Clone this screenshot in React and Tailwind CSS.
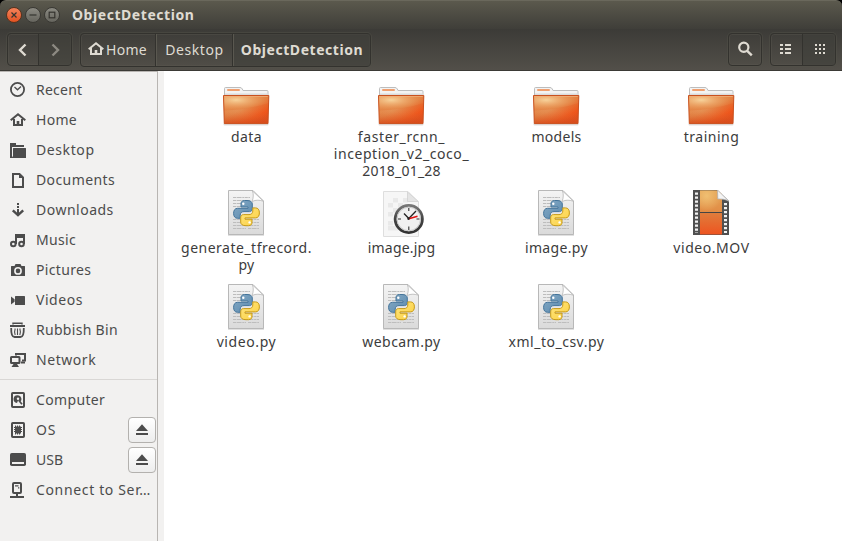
import React from 'react';

const INK = '#4c4c4c';

const sideIcons = {
  recent: (
    <g fill="none" stroke={INK}>
      <circle cx="7.5" cy="7.5" r="6.6" strokeWidth="1.8" />
      <path d="M4.5 5L7.5 7.8L11 4.5" strokeWidth="1.3" />
    </g>
  ),
  home: (
    <g fill="none" stroke={INK}>
      <path d="M0.7 8.3L8 2.2L15.3 8.3" strokeWidth="2" />
      <path d="M4 7V13H12V7" strokeWidth="2" />
      <path d="M8 13V9" strokeWidth="2.6" />
    </g>
  ),
  desktop: (
    <g fill={INK}>
      <path d="M0 1H6V3H14V5H2V16H0Z" />
      <path d="M3 6.5Q3 6 3.5 6H15.5Q16 6 16 6.5V16H1.5L3 14Z" />
    </g>
  ),
  documents: (
    <g>
      <path d="M3 2H9.5L13 5.5V15H3Z" fill="none" stroke={INK} strokeWidth="2" />
      <path d="M9 2L13 6H9Z" fill={INK} />
    </g>
  ),
  downloads: (
    <g fill={INK}>
      <path d="M7 1H9V3H7ZM7 4H9V6H7ZM7 7H9V12H7Z" />
      <path d="M2.8 8.3L8 13.2L13.2 8.3" fill="none" stroke={INK} strokeWidth="2.4" />
    </g>
  ),
  music: (
    <g fill="none" stroke={INK} strokeWidth="2">
      <path d="M6 12V3H14V12M6 5H14" />
      <circle cx="3.3" cy="12" r="2.3" />
      <circle cx="11.5" cy="12" r="2.3" />
    </g>
  ),
  pictures: (
    <g>
      <path d="M1 4.5Q1 4 1.5 4H4.5L5.5 2H10.5L11.5 4H14.5Q15 4 15 4.5V14H1Z" fill={INK} />
      <circle cx="8" cy="8.9" r="3.1" fill="none" stroke="#f2f1f0" strokeWidth="1.6" />
    </g>
  ),
  videos: (
    <g fill={INK}>
      <rect x="5" y="4" width="10" height="9" rx="0.6" />
      <path d="M1 4.5L4.6 7.3V9.7L1 12.5Z" />
    </g>
  ),
  bin: (
    <g fill="none" stroke={INK}>
      <path d="M3 2.5V1.2H12V2.5" strokeWidth="1.4" />
      <path d="M0 4H15" strokeWidth="2" />
      <path d="M1.2 6Q1 15 4.5 15H10.5Q14 15 13.8 6" strokeWidth="1.8" />
      <path d="M5.2 6.5Q4 10 5.2 13M7.5 6.5V13M9.8 6.5Q11 10 9.8 13" strokeWidth="1.1" />
    </g>
  ),
  network: (
    <g fill="none" stroke={INK} strokeWidth="2">
      <path d="M6 3.5V2H15V8.5H12" />
      <rect x="1" y="5" width="8.5" height="6" rx="0.5" />
      <path d="M11 10.5H15" />
      <path d="M3.5 12H7L9 15H1.5Z" fill={INK} stroke="none" />
    </g>
  ),
  computer: (
    <g>
      <rect x="2" y="1" width="12" height="14" rx="0.8" fill="none" stroke={INK} strokeWidth="2" />
      <path d="M8 3.2A3.9 3.9 0 1 0 7 11L8.2 8.2L10.2 10A3.9 3.9 0 0 0 8 3.2Z" fill={INK} />
      <circle cx="8" cy="6.8" r="1.2" fill="#f2f1f0" />
      <path d="M8.7 8.3L12 12.3" stroke={INK} strokeWidth="1.7" />
    </g>
  ),
  os: (
    <g>
      <rect x="2" y="1" width="12" height="14" rx="0.8" fill="none" stroke={INK} strokeWidth="2" />
      <rect x="5" y="4.5" width="6" height="7" fill={INK} />
      <path d="M4 5.5H12M4 7.5H12M4 9.5H12M5.5 3.5V12.5M7.5 3.5V12.5M9.5 3.5V12.5" stroke={INK} />
    </g>
  ),
  usb: (
    <g>
      <rect x="0" y="1" width="16" height="13" rx="1.8" fill={INK} />
      <rect x="2" y="10" width="12" height="2" fill="#f2f1f0" />
    </g>
  ),
  server: (
    <g fill="none" stroke={INK}>
      <rect x="3" y="1" width="8" height="10" rx="1" strokeWidth="2" />
      <path d="M5 3.8H8.5M8 5.8H9.3" strokeWidth="1.2" />
      <path d="M7 11V15M0 15H14" strokeWidth="2" />
    </g>
  ),
};

const places = [
  ['recent', 'Recent', 'tracking-[0.25px]'],
  ['home', 'Home', 'tracking-[0.3px]'],
  ['desktop', 'Desktop', 'tracking-[0.6px]'],
  ['documents', 'Documents', 'tracking-[0.4px]'],
  ['downloads', 'Downloads', 'tracking-[0.5px]'],
  ['music', 'Music', 'tracking-[0.35px]'],
  ['pictures', 'Pictures', 'tracking-[0.35px]'],
  ['videos', 'Videos', 'tracking-[0.55px]'],
  ['bin', 'Rubbish Bin', 'tracking-[0.3px]'],
  ['network', 'Network', 'tracking-[0.55px]'],
];

const devices = [
  ['computer', 'Computer', 'tracking-[0.35px]'],
  ['os', 'OS', 'tracking-[0.8px]', true],
  ['usb', 'USB', 'tracking-[0.1px]', true],
  ['server', 'Connect to Ser…', 'tracking-[0.65px]'],
];

function Place({ icon, label, tracking, eject }) {
  return (
    <li className="flex h-[30px] items-center pl-[10px] pr-px">
      <svg className="size-4 shrink-0" viewBox="0 0 16 16">{sideIcons[icon]}</svg>
      <span className={`ml-[10px] whitespace-nowrap pb-[2px] ${tracking}`}>{label}</span>
      {eject && (
        <button className="ml-auto flex h-[26px] w-7 shrink-0 items-center justify-center rounded-[4px] border border-[#b3b1ae] bg-linear-to-b from-white to-[#ededed]">
          <svg width="12" height="12" viewBox="0 0 12 12" fill={INK}>
            <path d="M6 0.3L12 7H0Z" />
            <rect y="9" width="12" height="2" />
          </svg>
        </button>
      )}
    </li>
  );
}

function Folder() {
  return (
    <svg width="50" height="50" viewBox="0 0 50 50">
      <defs>
        <linearGradient id="folderBase" x1="0" y1="0" x2="0.8" y2="1">
          <stop offset="0" stopColor="#e58a4c" />
          <stop offset="0.5" stopColor="#e07a3c" />
          <stop offset="0.8" stopColor="#ee5218" />
          <stop offset="1" stopColor="#e24a18" />
        </linearGradient>
        <radialGradient id="folderGlow" cx="0.28" cy="0.3" r="0.75">
          <stop offset="0" stopColor="#f7d39c" />
          <stop offset="1" stopColor="#eda15c" stopOpacity="0.1" />
        </radialGradient>
        <linearGradient id="folderShade" x1="0" y1="0" x2="0" y2="1">
          <stop offset="0.6" stopColor="#d8622b" stopOpacity="0" />
          <stop offset="1" stopColor="#d0481a" stopOpacity="0.7" />
        </linearGradient>
      </defs>
      <rect x="2.5" y="44" width="45" height="2.6" rx="1" fill="#000" opacity="0.12" />
      <path d="M3.5 20V9.5Q3.5 8.5 4.5 8.5H19Q20.5 8.5 21.3 10L22 11.5H46Q47 11.5 47 12.5V20Z" fill="#f3f3f3" stroke="#bdbdbd" />
      <rect x="6" y="10" width="13" height="2" rx="1" fill="#f0a070" />
      <rect x="4" y="14.5" width="43" height="2" fill="#dcdcdc" />
      <path d="M2.5 16.5H47.8L47 44.6H3.3Z" fill="url(#folderBase)" />
      <path d="M2.5 16.5H47.8L47 44.6H3.3Z" fill="url(#folderShade)" />
      <path d="M2.5 16.5H47.8L47.6 24Q27 31 2.8 31.5Z" fill="url(#folderGlow)" />
      <path d="M2.8 31.5Q27 31 47.6 24L47 44.6H3.3Z" fill="url(#folderGlow)" opacity="0.25" />
      <path d="M2.5 16.5H47.8L47 44.6H3.3Z" fill="none" stroke="#c9511f" />
      <path d="M3.5 17.5H46.8" stroke="#f0ae78" opacity="0.8" />
    </svg>
  );
}

const PAGE = 'M7.5 0.5H32L42.5 11V44.5H7.5Z';
const SNAKE =
  'M23.5 10.5C20.5 10.7 20 12.2 20 14V17H27V18.3H16.5C13.8 18.3 12.6 20.5 12.6 23.3C12.6 26.5 14 28.3 16.5 28.3H19.2V25.2C19.2 22.8 20.8 21.6 23 21.6H28.5C30.4 21.6 31.3 20.3 31.3 18.5V14C31.3 11.8 29.4 10.5 26 10.5Z';

function PythonFile() {
  return (
    <svg width="50" height="50" viewBox="0 0 50 50">
      <defs>
        <linearGradient id="pyPage" x1="0" y1="0" x2="0" y2="1">
          <stop offset="0" stopColor="#f4f4f4" />
          <stop offset="1" stopColor="#dadada" />
        </linearGradient>
        <linearGradient id="pyBlue" x1="0" y1="0" x2="1" y2="1">
          <stop offset="0" stopColor="#86aac5" />
          <stop offset="1" stopColor="#5b8aae" />
        </linearGradient>
        <linearGradient id="pyGold" x1="0" y1="0" x2="1" y2="1">
          <stop offset="0" stopColor="#fbcf3f" />
          <stop offset="1" stopColor="#ffe680" />
        </linearGradient>
      </defs>
      <rect x="7" y="44" width="36" height="2" fill="#000" opacity="0.12" />
      <path d={PAGE} fill="url(#pyPage)" stroke="#b8b8b8" />
      <path d="M12 7.5H29M12 10.5H29M12 13.5H29M12 16.5H29M12 29.5H38M12 32.5H38M12 35.5H38M12 38.5H25M27 38.5H38" stroke="#bdbdbd" strokeDasharray="3 0.6 5 0.7 2 0.5" />
      <path d="M31.5 1C32.6 4 32.6 8 31 11.5C35 9.6 39 10 42.5 11.3Z" fill="#fff" stroke="#b5b5b5" strokeWidth="0.8" />
      <path d={SNAKE} fill="url(#pyBlue)" stroke="#44749a" strokeWidth="1" />
      <path d={SNAKE} transform="rotate(180 25.5 23.1)" fill="url(#pyGold)" stroke="#c79a18" strokeWidth="1" />
      <circle cx="22.3" cy="13.8" r="1.2" fill="#fff" />
      <circle cx="28.6" cy="32.4" r="1.2" fill="#fff" />
    </svg>
  );
}

const CHECKS = [[17, 8], [27, 8], [12, 13], [22, 13], [17, 18], [12, 22], [17, 27], [12, 31], [12, 36], [17, 36], [22, 17]];

function LoadingImage() {
  return (
    <svg width="50" height="50" viewBox="0 0 50 50">
      <defs>
        <linearGradient id="clockRim" x1="0" y1="0" x2="0" y2="1">
          <stop offset="0" stopColor="#777" />
          <stop offset="0.5" stopColor="#444" />
          <stop offset="1" stopColor="#333" />
        </linearGradient>
      </defs>
      <path d="M7.5 1.5H32L42.5 12V46.5H7.5Z" fill="#f6f6f6" stroke="#dedede" />
      {CHECKS.map(([x, y]) => (
        <rect key={`${x}-${y}`} x={x} y={y} width="5" height="4.5" fill="#e9e9e9" />
      ))}
      <path d="M31.5 2V11.5H42.3Z" fill="#e4e4e4" stroke="#d0d0d0" strokeWidth="0.8" />
      <circle cx="32.8" cy="29" r="13.6" fill="#f1f1f1" stroke="url(#clockRim)" strokeWidth="2.8" />
      <circle cx="32.8" cy="29" r="11.8" fill="none" stroke="#bbb" strokeWidth="0.8" />
      <path d="M32.8 18V21M32.8 36.5V40M22 29H25M40.5 29H43.5" stroke="#333" strokeWidth="1.1" />
      <path d="M32.8 28.5L28 23.5M32.8 28.5L40 21" stroke="#222" strokeWidth="1.3" />
      <path d="M32.8 28.8L41.5 26.3" stroke="#e01010" strokeWidth="1.5" />
      <circle cx="32.5" cy="28.7" r="1.2" fill="#222" />
    </svg>
  );
}

function VideoFile() {
  return (
    <svg width="50" height="50" viewBox="0 0 50 50">
      <defs>
        <linearGradient id="reel" x1="0" y1="0" x2="0" y2="1">
          <stop offset="0" stopColor="#e3a255" />
          <stop offset="0.5" stopColor="#e28c45" />
          <stop offset="0.51" stopColor="#df7d3c" />
          <stop offset="1" stopColor="#ee5420" />
        </linearGradient>
        <radialGradient id="reelGlow" cx="0.3" cy="0.25" r="0.7">
          <stop offset="0" stopColor="#f0bf72" />
          <stop offset="1" stopColor="#f0bf72" stopOpacity="0" />
        </radialGradient>
      </defs>
      <path d="M7 0H31.5L43 11V45H7Z" fill="#505050" />
      <path d="M14 0.5H36V44.5H14Z" fill="url(#reel)" />
      <path d="M14 0.5H36V22H14Z" fill="url(#reelGlow)" />
      <path d="M14 22.5H36" stroke="#444" />
      <path d="M10.5 2.5V43M39.5 13V43" stroke="#f2f2f2" strokeWidth="3" strokeDasharray="2.2 1.8" />
      <path d="M31.5 0H44V11.5Z" fill="#fff" />
      <path d="M31.5 0L43 11.2C39 9 35.5 9 31.8 9Z" fill="#f4f4f4" stroke="#b0b0b0" strokeWidth="0.8" />
    </svg>
  );
}

const files = [
  [Folder, [['data', 'tracking-[0.4px]']]],
  [Folder, [['faster_rcnn_', 'tracking-[0.6px]'], ['inception_v2_coco_', 'tracking-[0.55px]'], ['2018_01_28', 'tracking-[0.2px]']]],
  [Folder, [['models', 'tracking-[0.3px]']]],
  [Folder, [['training', 'tracking-[0.5px]']]],
  [PythonFile, [['generate_tfrecord.', 'tracking-[0.5px]'], ['py', 'tracking-[0.2px]']]],
  [LoadingImage, [['image.jpg', 'tracking-[0.2px]']]],
  [PythonFile, [['image.py', 'tracking-[0.35px]']]],
  [VideoFile, [['video.MOV', 'tracking-[0.55px]']]],
  [PythonFile, [['video.py', 'tracking-[0.6px]']]],
  [PythonFile, [['webcam.py', 'tracking-[0.45px]']]],
  [PythonFile, [['xml_to_csv.py', 'tracking-[0.5px]']]],
];

const group = 'flex rounded-[4px] border border-[#33322e] shadow-[0_0_0_1px_#56544c66,inset_0_0_0_1px_#5a585066]';

function WindowButton({ close, children }) {
  return (
    <button className={`flex size-4 items-center justify-center rounded-full border ${close ? 'border-[#57331f] bg-linear-to-b from-[#f58259] to-[#e2521f]' : 'border-[#3a3934] bg-linear-to-b from-[#8b8a82] to-[#66655e]'}`}>
      <svg width="14" height="14" viewBox="0 0 14 14" className="shrink-0" fill="none" stroke="#35342f" strokeWidth="1.2">{children}</svg>
    </button>
  );
}

export default function App() {
  return (
    <div className="flex h-[541px] w-[842px] flex-col overflow-hidden bg-white font-['Noto_Sans','Open_Sans',sans-serif] text-[14px] leading-[17px] text-[#3c3c3c]">
      <div className="bg-black">
        <header className="flex h-[29px] items-center rounded-t-[6px] border-t border-[#6a685c] bg-linear-to-b from-[#5b594d] to-[#3f3e39] pl-[6px]">
          <div className="flex gap-[3px]">
            <WindowButton close><path d="M4.5 4.5L9.5 9.5M9.5 4.5L4.5 9.5" /></WindowButton>
            <WindowButton><path d="M3.5 7H10.5" /></WindowButton>
            <WindowButton><rect x="4.2" y="4.2" width="5.6" height="5.6" /></WindowButton>
          </div>
          <h1 className="ml-[12px] pb-[2px] font-bold tracking-[0.55px] text-[#dfdbd2]">ObjectDetection</h1>
        </header>
      </div>
      <nav className="flex h-[42px] shrink-0 items-start border-b border-[#3b3a36] bg-linear-to-b from-[#3c3b37] to-[#524f49] pl-[7px] pr-[6px] pt-1 text-[#dfdbd2]">
        <div className={`${group} h-[33px] w-[65px]`}>
          <button className="flex w-[31px] items-center justify-center border-r border-[#33322e]">
            <svg width="12" height="14" viewBox="0 0 12 14" fill="none" stroke="#dfdbd2" strokeWidth="2.4"><path d="M8.5 1.5L3 7L8.5 12.5" /></svg>
          </button>
          <button className="flex flex-1 items-center justify-center bg-[#403f3a80]">
            <svg width="12" height="14" viewBox="0 0 12 14" fill="none" stroke="#8d8a82" strokeWidth="2.4"><path d="M3.5 1.5L9 7L3.5 12.5" /></svg>
          </button>
        </div>
        <div className={`${group} ml-2 h-[34px] w-[291px]`}>
          <button className="flex w-[75px] items-center border-r border-[#33322e] pb-[2px] pl-[7px]">
            <svg width="16" height="16" viewBox="0 0 16 16" fill="none" stroke="#dfdbd2" strokeWidth="2">
              <path d="M0.7 8.3L8 2.2L15.3 8.3M3 7V13H13V7" />
              <path d="M8 13V9" strokeWidth="2.6" />
            </svg>
            <span className="ml-[2px] tracking-[0.3px]">Home</span>
          </button>
          <button className="flex w-[77px] items-center justify-center border-x border-l-[#5a5850] border-r-[#33322e] pb-[2px]">
            <span className="tracking-[0.55px]">Desktop</span>
          </button>
          <button className="flex flex-1 items-center justify-center border-l border-[#5a5850] bg-[#403f3a99] pb-[2px] font-bold">
            <span className="tracking-[0.55px]">ObjectDetection</span>
          </button>
        </div>
        <button className={`${group} ml-auto h-[33px] w-[34px] items-center justify-center pb-px`}>
          <svg width="16" height="16" viewBox="0 0 16 16" fill="none" stroke="#dfdbd2"><circle cx="6.8" cy="6.3" r="4.6" strokeWidth="2.2" /><path d="M10.2 9.8L14.8 14.3" strokeWidth="2.4" /></svg>
        </button>
        <div className={`${group} ml-2 h-[33px] w-[66px]`}>
          <button className="flex w-8 items-center border-r border-[#33322e] pb-px pl-[9px]">
            <svg width="11" height="10" viewBox="0 0 11 10" fill="#dfdbd2"><path d="M0 0H3V2H0ZM5 0H11V2H5ZM0 4H3V6H0ZM5 4H11V6H5ZM0 8H3V10H0ZM5 8H11V10H5Z" /></svg>
          </button>
          <button className="flex flex-1 items-center bg-[#403f3a99] pb-px pl-[12px]">
            <svg width="10" height="10" viewBox="0 0 10 10" fill="#dfdbd2"><path d="M0 0H2V2H0ZM4 0H6V2H4ZM8 0H10V2H8ZM0 4H2V6H0ZM4 4H6V6H4ZM8 4H10V6H8ZM0 8H2V10H0ZM4 8H6V10H4ZM8 8H10V10H8Z" /></svg>
          </button>
        </div>
      </nav>
      <div className="flex min-h-0 flex-1">
        <div className="w-[164px] shrink-0 bg-[#f2f1f0]">
          <aside className="h-full w-[158px] border-r border-t border-[#b8b5b2] pt-[3px] text-[#4c4c4c]">
            <ul>{places.map(([i, l, t]) => <Place key={l} icon={i} label={l} tracking={t} />)}</ul>
            <div className="mb-[5px] mt-1 h-px bg-[#d9d7d5]" />
            <ul>{devices.map(([i, l, t, e]) => <Place key={l} icon={i} label={l} tracking={t} eject={e} />)}</ul>
          </aside>
        </div>
        <main className="grid flex-1 grid-cols-[repeat(4,155px)] content-start gap-y-[10px] pl-[4px] pt-2">
          {files.map(([Icon, lines]) => (
            <figure key={lines[0][0]} className="flex flex-col items-center">
              <Icon />
              <figcaption className="-mt-px pb-px pl-[2px] text-center">
                {lines.map(([text, tracking]) => <span key={text} className={`block whitespace-nowrap ${tracking}`}>{text}</span>)}
              </figcaption>
            </figure>
          ))}
        </main>
      </div>
    </div>
  );
}
